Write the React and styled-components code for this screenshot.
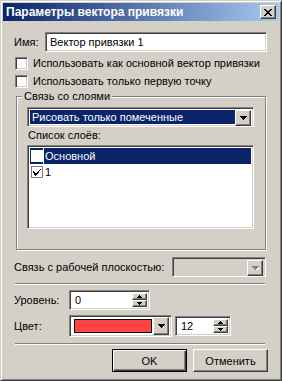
import React from 'react'
import styled, { createGlobalStyle, css } from 'styled-components'

const GlobalStyle = createGlobalStyle`
html, body {
  margin: 0;
  padding: 0;
  background: #D4D0C8;
}
body {
  font-family: "Liberation Sans", Arial, sans-serif;
  font-size: 11px;
  color: #000;
}
* { box-sizing: border-box; }
`

// classic 3D edges
const raised = css`
background: #D4D0C8;
border: 1px solid;
border-color: #fff #404040 #404040 #fff;
box-shadow: inset -1px -1px #808080, inset 1px 1px #D4D0C8;
`
const sunken = css`
border: 1px solid;
border-color: #808080 #fff #fff #808080;
box-shadow: inset 1px 1px #404040, inset -1px -1px #D4D0C8;
`

const Arrow = ({ disabled }) => (
  <svg width="7" height="4" viewBox="0 0 7 4" shapeRendering="crispEdges">
    {disabled && <path d="M1 1h7v1H1zM2 2h5v1H2zM3 3h3v1H3zM4 4h1v1H4z" fill="#fff" />}
    <path d="M0 0h7v1H0zM1 1h5v1H1zM2 2h3v1H2zM3 3h1v1H3z" fill={disabled ? '#808080' : '#000'} />
  </svg>
)

const SpinArrow = ({ up }) => (
  <svg width="5" height="3" viewBox="0 0 5 3" shapeRendering="crispEdges">
    <path d={up ? 'M2 0h1v1H2zM1 1h3v1H1zM0 2h5v1H0z' : 'M0 0h5v1H0zM1 1h3v1H1zM2 2h1v1H2z'} fill="#000" />
  </svg>
)

const Spinner = ({ value, width }) => (
  <SpinBox $w={width}>
    <SpinText>{value}</SpinText>
    <SpinButtons>
      <SpinButton><SpinArrow up /></SpinButton>
      <SpinButton><SpinArrow /></SpinButton>
    </SpinButtons>
  </SpinBox>
)

const layers = [
  { name: 'Основной', checked: false, selected: true },
  { name: '1', checked: true, selected: false },
]

const App = () => {
  return (
    <>
      <GlobalStyle />
      <Window>
        <TitleBar>
          <Title>Параметры вектора привязки</Title>
          <CloseButton>
            <svg width="8" height="7" viewBox="0 0 8 7" shapeRendering="crispEdges">
              <path d="M0 0h2v1H0zM6 0h2v1H6zM1 1h2v1H1zM5 1h2v1H5zM2 2h4v1H2zM3 3h2v1H3zM2 4h4v1H2zM1 5h2v1H1zM5 5h2v1H5zM0 6h2v1H0zM6 6h2v1H6z" fill="#000" />
            </svg>
          </CloseButton>
        </TitleBar>
        <Client>
          <Row $h={20} $mt={11}>
            <Label $w={31}>Имя:</Label>
            <TextField $w={222}>Вектор привязки 1</TextField>
          </Row>
          <CheckRow $mt={2}>
            <CheckBox />
            <span>Использовать как основной вектор привязки</span>
          </CheckRow>
          <CheckRow>
            <CheckBox />
            <span>Использовать только первую точку</span>
          </CheckRow>

          <Group>
            <Legend>Связь со слоями</Legend>
            <GroupBody>
              <Combo $w={227}>
                <ComboValue $selected>Рисовать только помеченные</ComboValue>
                <ComboButton><Arrow /></ComboButton>
              </Combo>
              <ListLabel>Список слоёв:</ListLabel>
              <ListBox>
                {layers.map((l, i) => (
                  <ListItem key={i} $selected={l.selected}>
                    <ItemCheck $selected={l.selected}>
                      {l.checked && (
                        <svg width="8" height="7" viewBox="0 0 8 7" shapeRendering="crispEdges">
                          <path d="M7 0h1v1H7zM6 1h1v1H6zM0 2h1v1H0zM5 2h1v1H5zM0 3h2v1H0zM4 3h2v1H4zM1 4h4v1H1zM1 5h3v1H1zM2 6h1v1H2z" fill="#000" />
                        </svg>
                      )}
                    </ItemCheck>
                    <Caret $show={l.selected} />
                    <span>{l.name}</span>
                  </ListItem>
                ))}
              </ListBox>
            </GroupBody>
          </Group>

          <Row $h={20} $mt={7}>
            <Label $w={158}>Связь с рабочей плоскостью:</Label>
            <Combo $w={94} $disabled>
              <ComboValue />
              <ComboButton><Arrow disabled /></ComboButton>
            </Combo>
          </Row>

          <Separator $mt={6} />

          <Row $h={20} $mt={5}>
            <Label $w={55}>Уровень:</Label>
            <Spinner value="0" width={81} />
          </Row>

          <Row $h={22} $mt={5}>
            <Label $w={55}>Цвет:</Label>
            <ColorCombo>
              <Swatch $color="#FF4444" />
              <ColorButton><Arrow /></ColorButton>
            </ColorCombo>
            <SpinSlot>
              <Spinner value="12" width={56} />
            </SpinSlot>
          </Row>

          <Separator $mt={6} />

          <Buttons>
            <Button $default>OK</Button>
            <Button>Отменить</Button>
          </Buttons>
        </Client>
      </Window>
    </>
  )
}

export default App

const Window = styled.div`
width: 282px;
height: 381px;
background: #D4D0C8;
border: 1px solid;
border-color: #D4D0C8 #404040 #404040 #D4D0C8;
box-shadow: inset 1px 1px #fff, inset -1px -1px #808080;
padding: 2px;
display: flex;
flex-direction: column;
`

const TitleBar = styled.div`
height: 18px;
display: flex;
align-items: center;
justify-content: space-between;
padding: 0 3px 0 3px;
background: linear-gradient(to right, #0A246A, #A6CAF0);
`

const Title = styled.div`
color: #fff;
font-weight: bold;
font-size: 12px;
line-height: 18px;
white-space: nowrap;
`

const CloseButton = styled.div`
${raised}
width: 16px;
height: 14px;
display: flex;
align-items: center;
justify-content: center;
`

const Client = styled.div`
display: flex;
flex-direction: column;
padding: 0 11px;
`

const Row = styled.div`
display: flex;
align-items: center;
height: ${p => p.$h}px;
margin-top: ${p => p.$mt || 0}px;
`

const Label = styled.div`
width: ${p => p.$w}px;
flex: none;
white-space: nowrap;
`

const TextField = styled.div`
${sunken}
width: ${p => p.$w}px;
height: 100%;
background: #fff;
padding: 0 4px;
display: flex;
align-items: center;
`

const CheckRow = styled.div`
display: flex;
align-items: center;
height: 18px;
margin-top: ${p => p.$mt || 0}px;
padding-left: 1px;
white-space: nowrap;
`

const CheckBox = styled.div`
${sunken}
width: 13px;
height: 13px;
background: #fff;
margin-right: 5px;
flex: none;
`

const Group = styled.fieldset`
margin: 0 0 0 2px;
width: 250px;
padding: 0 0 0 5px;
border: 1px solid #808080;
box-shadow: inset 1px 1px #fff, 1px 1px #fff;
min-width: 0;
`

const Legend = styled.legend`
padding: 0 2px;
line-height: 13px;
height: 13px;
background: #D4D0C8;
`

const GroupBody = styled.div`
display: flex;
flex-direction: column;
margin-left: 5px;
padding: 4px 0 20px 0;
`

const Combo = styled.div`
${sunken}
width: ${p => p.$w}px;
height: 20px;
flex: none;
display: flex;
padding: 2px;
background: ${p => (p.$disabled ? '#D4D0C8' : '#fff')};
`

const ComboValue = styled.div`
flex: 1;
height: 100%;
display: flex;
align-items: center;
padding-left: 2px;
white-space: nowrap;
background: ${p => (p.$selected ? '#0A246A' : 'transparent')};
color: ${p => (p.$selected ? '#fff' : '#000')};
`

const ComboButton = styled.div`
${raised}
width: 16px;
height: 16px;
flex: none;
display: flex;
align-items: center;
justify-content: center;
`

const ListLabel = styled.div`
height: 14px;
line-height: 14px;
margin-top: 1px;
padding-left: 1px;
`

const ListBox = styled.div`
${sunken}
margin-top: 3px;
width: 227px;
height: 84px;
background: #fff;
padding: 2px;
`

const ListItem = styled.div`
display: flex;
align-items: center;
height: 16px;
padding-left: 1px;
background: ${p => (p.$selected ? '#0A246A' : 'transparent')};
color: ${p => (p.$selected ? '#fff' : '#000')};
`

const ItemCheck = styled.div`
width: 12px;
height: 12px;
flex: none;
background: #fff;
border: 1px solid ${p => (p.$selected ? '#fff' : '#808080')};
display: flex;
align-items: center;
justify-content: center;
`

const Caret = styled.div`
width: 1px;
height: 16px;
margin-right: 1px;
background: ${p => (p.$show ? '#fff' : 'transparent')};
`

const Separator = styled.div`
margin: ${p => p.$mt}px 0 0 1px;
width: 250px;
height: 2px;
border-top: 1px solid #808080;
border-bottom: 1px solid #fff;
`

const SpinBox = styled.div`
${sunken}
width: ${p => p.$w}px;
height: 20px;
flex: none;
background: #fff;
display: flex;
padding: 2px;
`

const SpinText = styled.div`
flex: 1;
display: flex;
align-items: center;
padding-left: 3px;
`

const SpinButtons = styled.div`
display: flex;
flex-direction: column;
width: 15px;
`

const SpinButton = styled.div`
${raised}
height: 8px;
display: flex;
align-items: center;
justify-content: center;
`

const ColorCombo = styled.div`
${sunken}
width: 103px;
height: 22px;
flex: none;
display: flex;
align-items: center;
padding: 2px;
background: #fff;
`

const Swatch = styled.div`
width: 80px;
height: 14px;
margin: 0 1px 0 2px;
border: 1px solid #000;
background: ${p => p.$color};
`

const ColorButton = styled.div`
${raised}
width: 16px;
height: 18px;
display: flex;
align-items: center;
justify-content: center;
`

const SpinSlot = styled.div`
margin-left: 3px;
display: flex;
`

const Buttons = styled.div`
display: flex;
justify-content: flex-end;
gap: 6px;
margin-top: 4px;
`

const Button = styled.div`
${raised}
width: 75px;
height: 23px;
display: flex;
align-items: center;
justify-content: center;
${p => p.$default && css`
  border: 1px solid #000;
  box-shadow: inset 1px 1px #fff, inset -1px -1px #404040, inset -2px -2px #808080;
`}
`
